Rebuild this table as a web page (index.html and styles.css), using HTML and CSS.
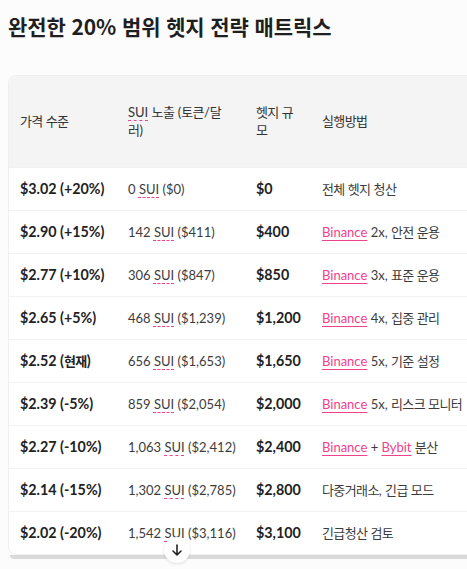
FILE: index.html
```html
<!DOCTYPE html>
<html lang="ko">
<head>
<meta charset="utf-8">
<link rel="stylesheet" href="styles.css">
</head>
<body>
<h2 class="title">완전한 20% 범위 헷지 전략 매트릭스</h2>
<div class="wrap">
  <div class="card">
    <table class="matrix">
      <colgroup>
        <col class="c1"><col class="c2"><col class="c3"><col class="c4">
      </colgroup>
      <thead>
        <tr><th><span class="ko">가격 수준</span></th><th><span class="sui">SUI</span> <span class="ko">노출</span> (<span class="ko">토큰</span>/<span class="ko">달러</span>)</th><th><span class="ko">헷지 규모</span></th><th><span class="ko">실행방법</span></th></tr>
      </thead>
      <tbody>
        <tr><td class="b">$3.02 (+20%)</td><td>0 <span class="sui">SUI</span> ($0)</td><td class="b">$0</td><td><span class="ko">전체 헷지 청산</span></td></tr>
        <tr><td class="b">$2.90 (+15%)</td><td>142 <span class="sui">SUI</span> ($411)</td><td class="b">$400</td><td><span class="lnk">Binance</span> 2x, <span class="ko">안전 운용</span></td></tr>
        <tr><td class="b">$2.77 (+10%)</td><td>306 <span class="sui">SUI</span> ($847)</td><td class="b">$850</td><td><span class="lnk">Binance</span> 3x, <span class="ko">표준 운용</span></td></tr>
        <tr><td class="b">$2.65 (+5%)</td><td>468 <span class="sui">SUI</span> ($1,239)</td><td class="b">$1,200</td><td><span class="lnk">Binance</span> 4x, <span class="ko">집중 관리</span></td></tr>
        <tr><td class="b">$2.52 (<span class="ko">현재</span>)</td><td>656 <span class="sui">SUI</span> ($1,653)</td><td class="b">$1,650</td><td><span class="lnk">Binance</span> 5x, <span class="ko">기준 설정</span></td></tr>
        <tr><td class="b">$2.39 (-5%)</td><td>859 <span class="sui">SUI</span> ($2,054)</td><td class="b">$2,000</td><td><span class="lnk">Binance</span> 5x, <span class="ko">리스크 모니터</span></td></tr>
        <tr><td class="b">$2.27 (-10%)</td><td>1,063 <span class="sui">SUI</span> ($2,412)</td><td class="b">$2,400</td><td><span class="lnk">Binance</span> + <span class="lnk">Bybit</span> <span class="ko">분산</span></td></tr>
        <tr><td class="b">$2.14 (-15%)</td><td>1,302 <span class="sui">SUI</span> ($2,785)</td><td class="b">$2,800</td><td><span class="ko">다중거래소</span>, <span class="ko">긴급 모드</span></td></tr>
        <tr><td class="b">$2.02 (-20%)</td><td>1,542 <span class="sui">SUI</span> ($3,116)</td><td class="b">$3,100</td><td><span class="ko">긴급청산 검토</span></td></tr>
      </tbody>
    </table>
  </div>
  <div class="scrollbar"></div>
  <button class="down" aria-label="scroll down">
    <svg width="14" height="14" viewBox="0 0 14 14" fill="none" stroke="#222" stroke-width="1.6" stroke-linecap="round" stroke-linejoin="round"><path d="M7 2v10M3 8l4 4 4-4"/></svg>
  </button>
</div>
</body>
</html>
```
FILE: styles.css
```css
html, body { margin: 0; padding: 0; }
body {
  background: #fcfcfc;
  font-family: "Lato", "Noto Sans CJK KR", sans-serif;
  color: #333;
  overflow: hidden;
  width: 467px;
  height: 569px;
}
.title {
  margin: 0;
  padding: 12px 0 0 8px;
  font-family: "Noto Sans CJK KR", "Noto Sans", sans-serif;
  font-size: 21px;
  font-weight: 700;
  line-height: 28px;
  color: #1f1f1f;
  letter-spacing: -0.1px;
}
.wrap {
  position: relative;
  margin-top: 35px;
  margin-left: 8px;
  width: 459px;
  overflow: hidden;
  height: 494px;
}
.card {
  width: 540px;
  background: #fff;
  border-radius: 8px;
  border: 1px solid #efefef;
  overflow: hidden;
}
.matrix {
  border-collapse: collapse;
  table-layout: fixed;
  width: 540px;
  font-size: 13px;
  line-height: 18px;
}
.c1 { width: 108px; }
.c2 { width: 128px; }
.c3 { width: 66px; }
.c4 { width: 238px; }
.matrix th {
  background: #f4f4f4;
  text-align: left;
  font-weight: 400;
  color: #333;
  padding: 27px 11px 28px;
  vertical-align: middle;
}
.matrix td {
  padding: 12px 11px 12px;
  border-top: 1px solid #f1f1f1;
  color: #3c3c3c;
  white-space: nowrap;
  height: 18px;
}
.matrix td.b { font-weight: 700; color: #222; font-size: 14.3px; }
.ko {
  font-family: "Noto Sans CJK KR", sans-serif;
  letter-spacing: -0.6px;
}
.matrix td.b .ko { font-size: 13px; }
.sui {
  text-decoration: underline dashed #f0418c;
  text-underline-offset: 3px;
  text-decoration-thickness: 1px;
}
.lnk {
  color: #f0418c;
  text-decoration: underline solid #f0418c;
  text-underline-offset: 3px;
  text-decoration-thickness: 1px;
}
.scrollbar {
  height: 4px;
  margin: 0 0 0 2px;
  background: #dadada;
  border-radius: 0 0 0 4px;
}
.down {
  position: absolute;
  left: 156px;
  top: 462px;
  width: 26px;
  height: 26px;
  border-radius: 50%;
  border: none;
  background: #fff;
  box-shadow: 0 1px 3px rgba(0,0,0,0.12);
  padding: 0;
  display: flex;
  align-items: center;
  justify-content: center;
}
```
